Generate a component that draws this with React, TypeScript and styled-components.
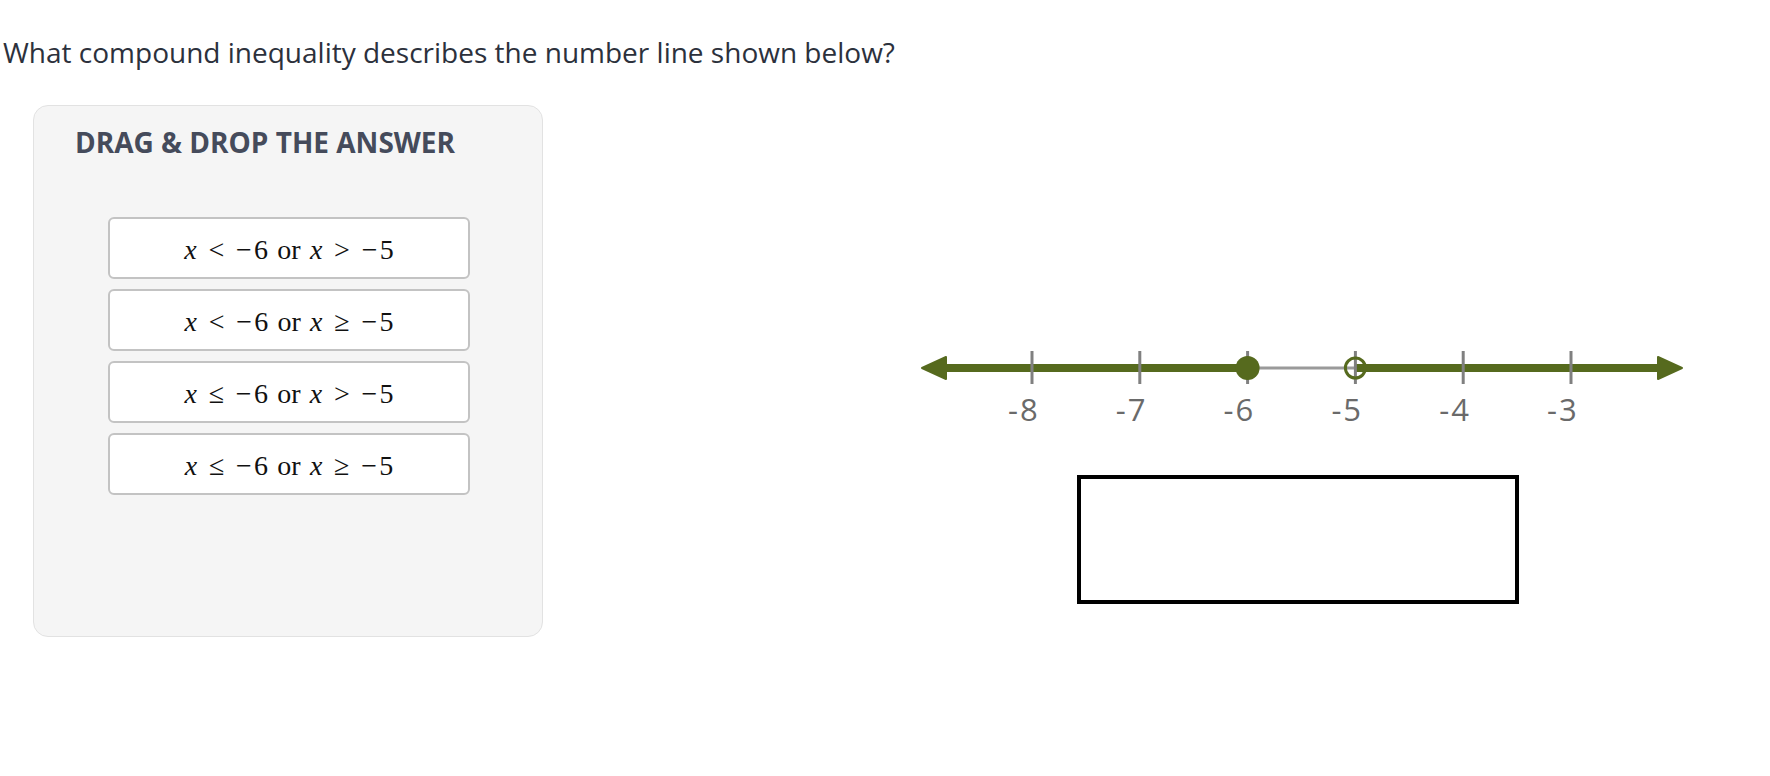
import React from "react";
import styled, { createGlobalStyle } from "styled-components";

const Global = createGlobalStyle`
  html, body { margin: 0; padding: 0; background: #ffffff; }
  body { font-family: "Open Sans", "Noto Sans", sans-serif; }
`;

const Page = styled.div`
  width: 1770px;
  height: 776px;
  overflow: hidden;
  padding-top: 33px;
  box-sizing: border-box;
`;

const Question = styled.p`
  margin: 0 0 0 3px;
  font-size: 28px;
  line-height: 38px;
  color: #2c313c;
`;

const Row = styled.div`
  display: flex;
  align-items: flex-start;
  margin-top: 34px;
  padding-left: 33px;
`;

const Panel = styled.div`
  width: 510px;
  height: 532px;
  box-sizing: border-box;
  background: #f5f5f5;
  border: 1px solid #e2e2e2;
  border-radius: 15px;
  padding: 17px 0 0 41px;
`;

const PanelTitle = styled.h2`
  margin: 0;
  font-size: 28px;
  line-height: 38px;
  font-weight: 700;
  color: #454b5b;
`;

const Choices = styled.div`
  display: flex;
  flex-direction: column;
  gap: 10px;
  margin: 56px 0 0 33px;
`;

const Choice = styled.div`
  width: 362px;
  height: 62px;
  box-sizing: border-box;
  background: #ffffff;
  border: 2px solid #c3c3c3;
  border-radius: 6px;
  display: flex;
  align-items: center;
  justify-content: center;
  padding-top: 4px;
  cursor: grab;
`;

const MathText = styled.span`
  font-family: "Liberation Serif", "DejaVu Serif", serif;
  font-size: 28px;
  color: #111111;
  white-space: nowrap;
`;

const Var = styled.i`
  font-style: italic;
`;

const Rel = styled.span`
  margin: 0 0.42em;
`;

const Neg = styled.span`
  margin-right: 0.08em;
`;

const Word = styled.span`
  margin: 0 0.33em;
`;

const Figure = styled.div`
  margin-left: 357px;
  margin-top: 235px;
  width: 800px;
  display: flex;
  flex-direction: column;
  align-items: center;
`;

const LineSvg = styled.svg`
  display: block;
  width: 800px;
  height: 95px;
`;

const DropZone = styled.div`
  margin-top: 40px;
  margin-left: -4px;
  width: 442px;
  height: 129px;
  box-sizing: border-box;
  border: 4px solid #000000;
  background: #ffffff;
`;

type ChoiceData = { left: string; right: string };

const choices: ChoiceData[] = [
  { left: "<", right: ">" },
  { left: "<", right: "≥" },
  { left: "≤", right: ">" },
  { left: "≤", right: "≥" },
];

const GREEN = "#566a1e";
const ticks = [-8, -7, -6, -5, -4, -3];
const tickX = (v: number) => 132 + (v + 8) * 107.8;

function NumberLine() {
  const y = 28;
  return (
    <LineSvg viewBox="0 0 800 95">
      <line x1={tickX(-6)} y1={y} x2={tickX(-5)} y2={y} stroke="#9a9a9a" strokeWidth={3} />
      <line x1={36} y1={y} x2={tickX(-6)} y2={y} stroke={GREEN} strokeWidth={8} />
      <line x1={tickX(-5)} y1={y} x2={768} y2={y} stroke={GREEN} strokeWidth={8} />
      <polygon points={`22,${y} 46,${y - 11} 46,${y + 11}`} fill={GREEN} stroke={GREEN} strokeWidth={2} strokeLinejoin="round" />
      <polygon points={`782,${y} 758,${y - 11} 758,${y + 11}`} fill={GREEN} stroke={GREEN} strokeWidth={2} strokeLinejoin="round" />
      {ticks.map((v) => (
        <line key={v} x1={tickX(v)} y1={11} x2={tickX(v)} y2={44} stroke="#808080" strokeWidth={3} />
      ))}
      <circle cx={tickX(-6)} cy={y} r={12} fill={GREEN} />
      <circle cx={tickX(-5)} cy={y} r={10} fill="none" stroke={GREEN} strokeWidth={3} />
      {ticks.map((v) => (
        <text
          key={`l${v}`}
          x={tickX(v) - 24}
          y={81}
          fontFamily="Open Sans, sans-serif"
          fontSize={31}
          letterSpacing={2}
          fill="#6a6a6a"
        >
          {v}
        </text>
      ))}
    </LineSvg>
  );
}

export default function App() {
  return (
    <Page>
      <Global />
      <Question>What compound inequality describes the number line shown below?</Question>
      <Row>
        <Panel>
          <PanelTitle>DRAG &amp; DROP THE ANSWER</PanelTitle>
          <Choices>
            {choices.map((c, i) => (
              <Choice key={i}>
                <MathText>
                  <Var>x</Var>
                  <Rel>{c.left}</Rel>
                  <Neg>−</Neg>6
                  <Word>or</Word>
                  <Var>x</Var>
                  <Rel>{c.right}</Rel>
                  <Neg>−</Neg>5
                </MathText>
              </Choice>
            ))}
          </Choices>
        </Panel>
        <Figure>
          <NumberLine />
          <DropZone />
        </Figure>
      </Row>
    </Page>
  );
}
